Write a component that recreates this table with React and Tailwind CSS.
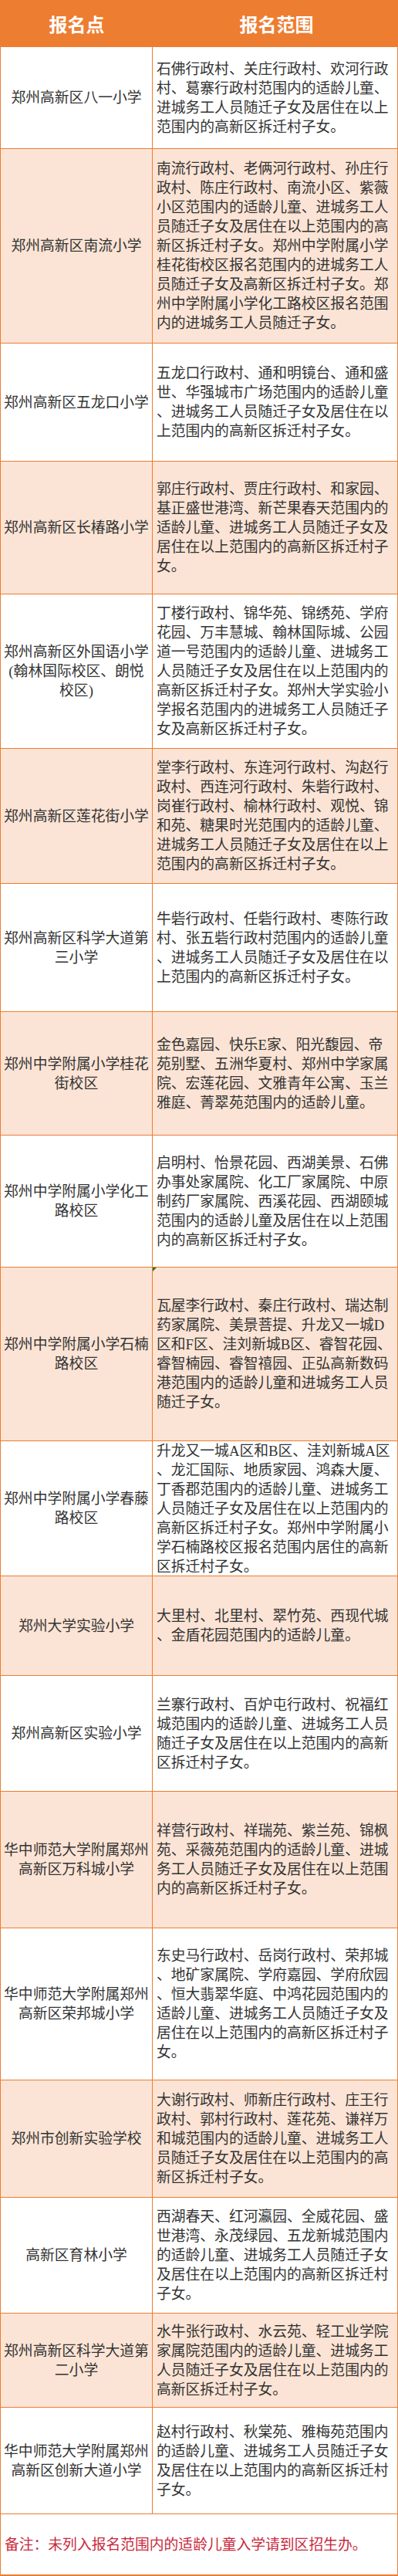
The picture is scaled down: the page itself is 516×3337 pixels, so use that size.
const FONT = { fontFamily: '"Liberation Serif", "Noto Sans CJK SC", serif' }

const ROWS = [
  { h: 'h-[132px]', name: ['郑州高新区八一小学'], area: ['石佛行政村、关庄行政村、欢河行政', '村、葛寨行政村范围内的适龄儿童、', '进城务工人员随迁子女及居住在以上', '范围内的高新区拆迁村子女。'] },
  { h: 'h-[252px]', name: ['郑州高新区南流小学'], area: ['南流行政村、老俩河行政村、孙庄行', '政村、陈庄行政村、南流小区、紫薇', '小区范围内的适龄儿童、进城务工人', '员随迁子女及居住在以上范围内的高', '新区拆迁村子女。郑州中学附属小学', '桂花街校区报名范围内的进城务工人', '员随迁子女及高新区拆迁村子女。郑', '州中学附属小学化工路校区报名范围', '内的进城务工人员随迁子女。'] },
  { h: 'h-[153px]', name: ['郑州高新区五龙口小学'], area: ['五龙口行政村、通和明镜台、通和盛', '世、华强城市广场范围内的适龄儿童', '、进城务工人员随迁子女及居住在以', '上范围内的高新区拆迁村子女。'] },
  { h: 'h-[172px]', name: ['郑州高新区长椿路小学'], area: ['郭庄行政村、贾庄行政村、和家园、', '基正盛世港湾、新芒果春天范围内的', '适龄儿童、进城务工人员随迁子女及', '居住在以上范围内的高新区拆迁村子', '女。'] },
  { h: 'h-[200px]', name: ['郑州高新区外国语小学', '(翰林国际校区、朗悦', '校区)'], area: ['丁楼行政村、锦华苑、锦绣苑、学府', '花园、万丰慧城、翰林国际城、公园', '道一号范围内的适龄儿童、进城务工', '人员随迁子女及居住在以上范围内的', '高新区拆迁村子女。郑州大学实验小', '学报名范围内的进城务工人员随迁子', '女及高新区拆迁村子女。'] },
  { h: 'h-[175px]', name: ['郑州高新区莲花街小学'], area: ['堂李行政村、东连河行政村、沟赵行', '政村、西连河行政村、朱砦行政村、', '岗崔行政村、榆林行政村、观悦、锦', '和苑、糖果时光范围内的适龄儿童、', '进城务工人员随迁子女及居住在以上', '范围内的高新区拆迁村子女。'] },
  { h: 'h-[166px]', name: ['郑州高新区科学大道第', '三小学'], area: ['牛砦行政村、任砦行政村、枣陈行政', '村、张五砦行政村范围内的适龄儿童', '、进城务工人员随迁子女及居住在以', '上范围内的高新区拆迁村子女。'] },
  { h: 'h-[160px]', name: ['郑州中学附属小学桂花', '街校区'], area: ['金色嘉园、快乐E家、阳光馥园、帝', '苑别墅、五洲华夏村、郑州中学家属', '院、宏莲花园、文雅青年公寓、玉兰', '雅庭、菁翠苑范围内的适龄儿童。'] },
  { h: 'h-[171px]', name: ['郑州中学附属小学化工', '路校区'], area: ['启明村、怡景花园、西湖美景、石佛', '办事处家属院、化工厂家属院、中原', '制药厂家属院、西溪花园、西湖颐城', '范围内的适龄儿童及居住在以上范围', '内的高新区拆迁村子女。'] },
  { h: 'h-[225px]', mark: true, name: ['郑州中学附属小学石楠', '路校区'], area: ['瓦屋李行政村、秦庄行政村、瑞达制', '药家属院、美景菩提、升龙又一城D', '区和F区、洼刘新城B区、睿智花园、', '睿智楠园、睿智禧园、正弘高新数码', '港范围内的适龄儿童和进城务工人员', '随迁子女。'] },
  { h: 'h-[175px]', name: ['郑州中学附属小学春藤', '路校区'], area: ['升龙又一城A区和B区、洼刘新城A区', '、龙汇国际、地质家园、鸿森大厦、', '丁香郡范围内的适龄儿童、进城务工', '人员随迁子女及居住在以上范围内的', '高新区拆迁村子女。郑州中学附属小', '学石楠路校区报名范围内居住的高新', '区拆迁村子女。'] },
  { h: 'h-[129px]', name: ['郑州大学实验小学'], area: ['大里村、北里村、翠竹苑、西现代城', '、金盾花园范围内的适龄儿童。'] },
  { h: 'h-[150px]', name: ['郑州高新区实验小学'], area: ['兰寨行政村、百炉屯行政村、祝福红', '城范围内的适龄儿童、进城务工人员', '随迁子女及居住在以上范围内的高新', '区拆迁村子女。'] },
  { h: 'h-[177px]', name: ['华中师范大学附属郑州', '高新区万科城小学'], area: ['祥营行政村、祥瑞苑、紫兰苑、锦枫', '苑、采薇苑范围内的适龄儿童、进城', '务工人员随迁子女及居住在以上范围', '内的高新区拆迁村子女。'] },
  { h: 'h-[197px]', name: ['华中师范大学附属郑州', '高新区荣邦城小学'], area: ['东史马行政村、岳岗行政村、荣邦城', '、地矿家属院、学府嘉园、学府欣园', '、恒大翡翠华庭、中鸿花园范围内的', '适龄儿童、进城务工人员随迁子女及', '居住在以上范围内的高新区拆迁村子', '女。'] },
  { h: 'h-[152px]', name: ['郑州市创新实验学校'], area: ['大谢行政村、师新庄行政村、庄王行', '政村、郭村行政村、莲花苑、谦祥万', '和城范围内的适龄儿童、进城务工人', '员随迁子女及居住在以上范围内的高', '新区拆迁村子女。'] },
  { h: 'h-[150px]', name: ['高新区育林小学'], area: ['西湖春天、红河瀛园、全威花园、盛', '世港湾、永茂绿园、五龙新城范围内', '的适龄儿童、进城务工人员随迁子女', '及居住在以上范围内的高新区拆迁村', '子女。'] },
  { h: 'h-[122px]', name: ['郑州高新区科学大道第', '二小学'], area: ['水牛张行政村、水云苑、轻工业学院', '家属院范围内的适龄儿童、进城务工', '人员随迁子女及居住在以上范围内的', '高新区拆迁村子女。'] },
  { h: 'h-[138px]', name: ['华中师范大学附属郑州', '高新区创新大道小学'], area: ['赵村行政村、秋棠苑、雅梅苑范围内', '的适龄儿童、进城务工人员随迁子女', '及居住在以上范围内的高新区拆迁村', '子女。'] },
]

function Row({ row, i }) {
  const bg = i % 2 === 0 ? 'bg-white' : 'bg-[#fbe4d5]'
  return (
    <div className={`flex border-b border-[#ed7d31] ${row.h} ${bg}`}>
      <div className="w-[197px] shrink-0 border-r border-[#ed7d31] flex flex-col items-center justify-center text-center">
        {row.name.map(l => (
          <div key={l} className="whitespace-nowrap">{l}</div>
        ))}
      </div>
      <div className="relative flex-1 flex flex-col justify-center pl-[5px]">
        {row.mark && (
          <span className="absolute top-0 left-0 w-0 h-0 border-t-[5px] border-r-[5px] border-t-[#1c7a1c] border-r-transparent" />
        )}
        {row.area.map((l, k) => (
          <div key={k} className="whitespace-nowrap">{l}</div>
        ))}
      </div>
    </div>
  )
}

export default function App() {
  return (
    <div
      className="w-[516px] bg-white border-x border-b-2 border-[#ed7d31] text-[18.8px] leading-[25px] text-[#333]"
      style={FONT}
    >
      {/* Header */}
      <div className="flex h-[61px] bg-[#ed7d31] text-white text-[24px] font-bold" style={{ fontFamily: '"Noto Sans CJK SC", sans-serif' }}>
        <div className="w-[197px] shrink-0 flex items-center justify-center">报名点</div>
        <div className="flex-1 flex items-center justify-center pl-[4px]">报名范围</div>
      </div>

      {ROWS.map((row, i) => (
        <Row key={i} row={row} i={i} />
      ))}

      {/* Footer */}
      <div className="h-[78px] flex items-center pl-[5px] text-[#c8283c]">
        备注：未列入报名范围内的适龄儿童入学请到区招生办。
      </div>
    </div>
  )
}
